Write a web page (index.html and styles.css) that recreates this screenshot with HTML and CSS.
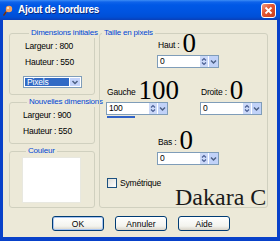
FILE: index.html
```html
<html lang="fr">
<head>
    <meta charset="utf-8" />
    <title>Ajout de bordures</title>
    <link rel="stylesheet" href="styles.css">
</head>
<body>
<div class="window">
    <div class="title">
        <svg class="ico" width="10" height="11" viewBox="0 0 10 11">
            <path d="M1 9 L4 4 L6 6 Z" fill="#C06020"/>
            <circle cx="6" cy="4" r="3.2" fill="#F0A060"/>
            <circle cx="5" cy="3" r="1.2" fill="#FFE0B0"/>
            <path d="M0.5 10.5 L3 7" stroke="#703010" stroke-width="1.4"/>
        </svg>
        <span>Ajout de bordures</span>
        <span class="close">
            <svg width="13" height="13" viewBox="0 0 13 13">
                <path d="M3.5 3.5 L9.5 9.5 M9.5 3.5 L3.5 9.5" stroke="#fff" stroke-width="1.8"/>
            </svg>
        </span>
    </div>

    <div class="content">
        <div class="main">
            <div class="left">
                <fieldset class="g1">
                    <legend>Dimensions initiales</legend>
                    <div class="line first">Largeur : 800</div>
                    <div class="line">Hauteur : 550</div>
                    <div class="select">
                        <span class="sel">Pixels</span>
                        <span class="drop">
                            <svg width="10" height="10" viewBox="0 0 10 10"><path d="M2.5 4 L5 6.5 L7.5 4" fill="none" stroke="#4D6185" stroke-width="1.5"/></svg>
                        </span>
                    </div>
                </fieldset>
                <fieldset class="g2">
                    <legend>Nouvelles dimensions</legend>
                    <div class="line first">Largeur : 900</div>
                    <div class="line">Hauteur : 550</div>
                </fieldset>
                <fieldset class="g3">
                    <legend>Couleur</legend>
                    <div class="swatch"></div>
                </fieldset>
            </div>

            <fieldset class="g4">
                <legend>Taille en pixels</legend>

                <div class="row r1">
                    <div class="field">
                        <div class="cap"><span class="lbl">Haut :</span><span class="big">0</span></div>
                        <div class="spin">
                            <span class="val">0</span>
                            <span class="ud"><svg width="8" height="11" viewBox="0 0 8 11"><path d="M2 4.5 L4 2.5 L6 4.5 M2 6.5 L4 8.5 L6 6.5" fill="none" stroke="#4A5F95" stroke-width="1.2"/></svg></span>
                            <span class="dd"><svg width="9" height="11" viewBox="0 0 9 11"><path d="M2 4.5 L4.5 7 L7 4.5" fill="none" stroke="#4D6185" stroke-width="1.5"/></svg></span>
                        </div>
                    </div>
                </div>

                <div class="row r2">
                    <div class="field">
                        <div class="cap"><span class="lbl">Gauche</span><span class="big">100</span></div>
                        <div class="spin">
                            <span class="val">100</span>
                            <span class="ud"><svg width="8" height="11" viewBox="0 0 8 11"><path d="M2 4.5 L4 2.5 L6 4.5 M2 6.5 L4 8.5 L6 6.5" fill="none" stroke="#4A5F95" stroke-width="1.2"/></svg></span>
                            <span class="dd"><svg width="9" height="11" viewBox="0 0 9 11"><path d="M2 4.5 L4.5 7 L7 4.5" fill="none" stroke="#4D6185" stroke-width="1.5"/></svg></span>
                        </div>
                        <div class="bar"></div>
                    </div>
                    <div class="field">
                        <div class="cap"><span class="lbl">Droite :</span><span class="big">0</span></div>
                        <div class="spin">
                            <span class="val">0</span>
                            <span class="ud"><svg width="8" height="11" viewBox="0 0 8 11"><path d="M2 4.5 L4 2.5 L6 4.5 M2 6.5 L4 8.5 L6 6.5" fill="none" stroke="#4A5F95" stroke-width="1.2"/></svg></span>
                            <span class="dd"><svg width="9" height="11" viewBox="0 0 9 11"><path d="M2 4.5 L4.5 7 L7 4.5" fill="none" stroke="#4D6185" stroke-width="1.5"/></svg></span>
                        </div>
                    </div>
                </div>

                <div class="row r3">
                    <div class="field">
                        <div class="cap"><span class="lbl">Bas :</span><span class="big">0</span></div>
                        <div class="spin">
                            <span class="val">0</span>
                            <span class="ud"><svg width="8" height="11" viewBox="0 0 8 11"><path d="M2 4.5 L4 2.5 L6 4.5 M2 6.5 L4 8.5 L6 6.5" fill="none" stroke="#4A5F95" stroke-width="1.2"/></svg></span>
                            <span class="dd"><svg width="9" height="11" viewBox="0 0 9 11"><path d="M2 4.5 L4.5 7 L7 4.5" fill="none" stroke="#4D6185" stroke-width="1.5"/></svg></span>
                        </div>
                    </div>
                </div>

                <div class="check"><span class="box"></span><span>Symétrique</span></div>
            </fieldset>
        </div>

        <div class="buttons">
            <button class="btn def">OK</button>
            <button class="btn">Annuler</button>
            <button class="btn">Aide</button>
        </div>
    </div>

    <div class="sig">Dakara C</div>
</div>
</body>
</html>
```

FILE: styles.css
```css
*
{
    box-sizing: border-box;
    margin: 0;
    padding: 0;
}

body
{
    margin: 0;
    background: #ECE9D8;
    font-family: "Liberation Sans", Arial, sans-serif;
    font-size: 8.5px;
    letter-spacing: -0.2px;
    line-height: 10px;
    color: #000;
}

.window
{
    position: relative;
    width: 280px;
    height: 241px;
    display: flex;
    flex-direction: column;
    background: #ECE9D8;
}

.title
{
    height: 20px;
    flex: none;
    display: flex;
    align-items: center;
    padding: 0 4px 0 3px;
    background: linear-gradient(#3D8DF5 0, #0F63EA 2px, #0058E6 5px, #0054E0 60%, #004FD6 85%, #0A3FB8 100%);
    color: #fff;
    font-weight: bold;
    font-size: 10px;
    letter-spacing: -0.3px;
    text-shadow: 1px 1px 0 #0A2A80;
}

.ico
{
    margin-right: 5px;
}

.close
{
    margin-left: auto;
    width: 15px;
    height: 15px;
    display: flex;
    align-items: center;
    justify-content: center;
    border: 1px solid #fff;
    border-radius: 3px;
    background: linear-gradient(135deg, #F09A80, #E2542F 45%, #C8401E);
}

.content
{
    flex: 1;
    display: flex;
    flex-direction: column;
    border: solid #0841C9;
    border-width: 0 3px 4px 3px;
    padding: 8px 9px 0 6px;
}

.main
{
    display: flex;
    gap: 4px;
    height: 180px;
}

.left
{
    width: 86px;
    display: flex;
    flex-direction: column;
}

fieldset
{
    border: 1px solid #D0D0BF;
    border-radius: 3px;
    min-width: 0;
}

legend
{
    color: #0046D5;
    font-size: 8px;
    letter-spacing: -0.2px;
    padding: 0 2px;
    margin-left: 4px;
    line-height: 10px;
    white-space: nowrap;
}

.g1
{
    height: 67px;
    padding-left: 15px;
}

.g2
{
    height: 47px;
    margin-top: 2px;
    padding-left: 13px;
}

.g3
{
    height: 62px;
    margin-top: 2px;
    padding-left: 12px;
}

.line
{
    margin-top: 6px;
    white-space: nowrap;
}

.line.first
{
    margin-top: 3px;
}

.select
{
    width: 59px;
    height: 12px;
    margin: 9px 0 0 -2px;
    display: flex;
    border: 1px solid #7F9DB9;
    background: #fff;
    padding: 1px;
}

.sel
{
    flex: 1;
    background: #316AC5;
    color: #fff;
    padding-left: 2px;
    line-height: 8px;
}

.drop
{
    width: 10px;
    display: flex;
    align-items: center;
    justify-content: center;
    background: #C3D3FA;
    margin-left: 1px;
}

.swatch
{
    width: 59px;
    height: 46px;
    margin-top: 1px;
    background: #fff;
    border: 1px solid #E8E8E0;
}

.g4
{
    flex: 1;
    height: 180px;
}

.g4 legend
{
    margin-left: 2px;
}

.row
{
    display: flex;
}

.r1
{
    margin-top: -5px;
    padding-left: 57px;
}

.r2
{
    margin-top: 12px;
    padding-left: 6px;
    gap: 32px;
}

.r3
{
    margin-top: 12px;
    padding-left: 57px;
}

.field
{
    width: 62px;
    flex: none;
}

.cap
{
    height: 20px;
    display: flex;
    align-items: flex-end;
    white-space: nowrap;
}

.lbl
{
    margin-bottom: 3px;
    padding-left: 1px;
}

.big
{
    font-family: "Liberation Serif", serif;
    font-size: 27px;
    letter-spacing: 0;
    line-height: 20px;
    margin-left: 3px;
    color: #000;
}

.spin
{
    margin-top: 2px;
    height: 13px;
    display: flex;
    border: 1px solid #7F9DB9;
    background: #fff;
}

.val
{
    flex: 1;
    padding-left: 2px;
    line-height: 11px;
}

.ud
{
    width: 8px;
    display: flex;
    background: #CCD9F8;
}

.dd
{
    width: 9px;
    display: flex;
    background: #C1D2F8;
    margin-left: 1px;
}

.bar
{
    margin: 1px 0 0 1px;
    width: 28px;
    height: 2px;
    background: #2F62C8;
}

.check
{
    margin: 13px 0 0 7px;
    display: flex;
    align-items: center;
    gap: 3px;
}

.box
{
    width: 10px;
    height: 10px;
    border: 1px solid #1C5180;
    background: linear-gradient(135deg, #DCDCD7, #fff);
}

.buttons
{
    display: flex;
    justify-content: center;
    gap: 11px;
    margin-top: 8px;
    padding-left: 5px;
}

.btn
{
    width: 52px;
    height: 15px;
    border: 1px solid #003C74;
    border-radius: 3px;
    background: linear-gradient(#FFFFFF, #F3F3EE 70%, #D8D3C8);
    font: inherit;
    color: #000;
}

.btn.def
{
    box-shadow: inset 0 0 0 1px #A8C4F0;
}

.sig
{
    position: absolute;
    left: 175px;
    top: 185px;
    font-family: "Liberation Serif", serif;
    font-size: 24px;
    letter-spacing: 0;
    line-height: 24px;
    color: #1A1A1A;
}
```
